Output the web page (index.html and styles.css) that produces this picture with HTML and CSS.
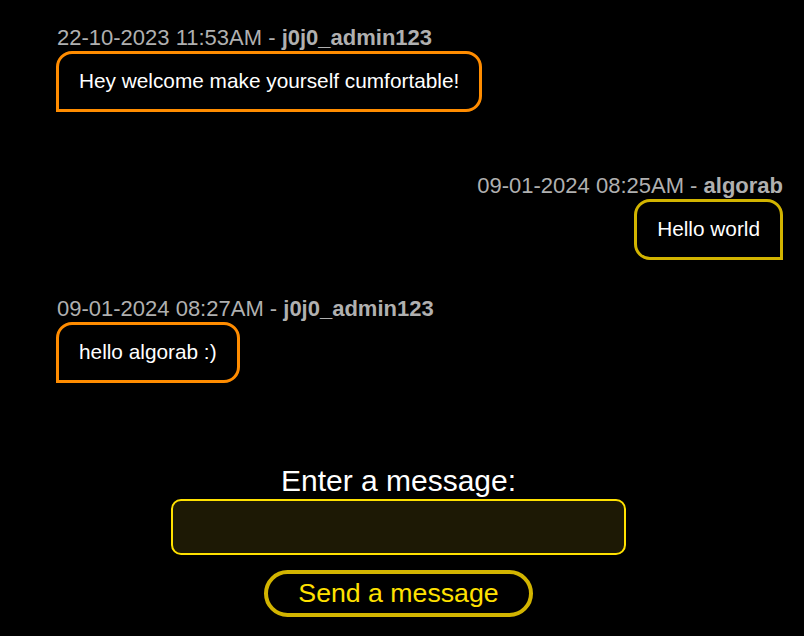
FILE: index.html
```html
<!DOCTYPE html>
<html>
<head>
<meta charset="utf-8">
<link rel="stylesheet" href="styles.css">
</head>
<body>
<div class="chat">
  <div class="msg other first">
    <div class="meta">22-10-2023 11:53AM - <b>j0j0_admin123</b></div>
    <div class="bubble">Hey welcome make yourself cumfortable!</div>
  </div>
  <div class="msg mine">
    <div class="meta">09-01-2024 08:25AM - <b>algorab</b></div>
    <div class="bubble">Hello world</div>
  </div>
  <div class="msg other">
    <div class="meta">09-01-2024 08:27AM - <b>j0j0_admin123</b></div>
    <div class="bubble">hello algorab :)</div>
  </div>
</div>
<form class="composer">
  <label class="label" for="m">Enter a message:</label>
  <input class="input" id="m" type="text">
  <button class="send" type="button">Send a message</button>
</form>
</body>
</html>
```
FILE: styles.css
```css
html, body {
  margin: 0;
  background: #000;
}
body {
  font-family: "Liberation Sans", Arial, sans-serif;
  color: #fff;
  width: 804px;
  height: 636px;
  overflow: hidden;
}
.chat {
  display: flex;
  flex-direction: column;
  padding: 26px 21px 0 56px;
}
.msg {
  display: flex;
  flex-direction: column;
  align-items: flex-start;
}
.msg.mine {
  align-items: flex-end;
  margin-top: 62px;
  margin-bottom: 37px;
}
.meta {
  font-size: 22px;
  line-height: 24px;
  color: #b0b0b0;
  margin-left: 1px;
}
.meta b { font-weight: bold; }
.bubble {
  font-size: 20.8px;
  line-height: 24px;
  padding: 15px 20px 16px 20px;
  border: 3px solid #ff8c00;
  border-radius: 16px 16px 16px 0;
  margin-top: 1px;
}
.mine .bubble {
  border-color: #d2b400;
  border-radius: 16px 16px 0 16px;
}
.composer {
  display: flex;
  flex-direction: column;
  align-items: center;
  margin-top: 81px;
  padding-right: 7px;
}
.label {
  font-size: 30px;
  line-height: 34px;
}
.input {
  box-sizing: border-box;
  width: 455px;
  height: 56px;
  margin-top: 1px;
  background: #1d1905;
  border: 2px solid #ffe100;
  border-radius: 10px;
  outline: none;
}
.send {
  box-sizing: border-box;
  margin-top: 15px;
  width: 269px;
  height: 47px;
  background: #000;
  border: 4px solid #d2b400;
  border-radius: 24px;
  color: #ffe100;
  font-family: "Liberation Sans", Arial, sans-serif;
  font-size: 26.7px;
  padding: 0;
}
```
